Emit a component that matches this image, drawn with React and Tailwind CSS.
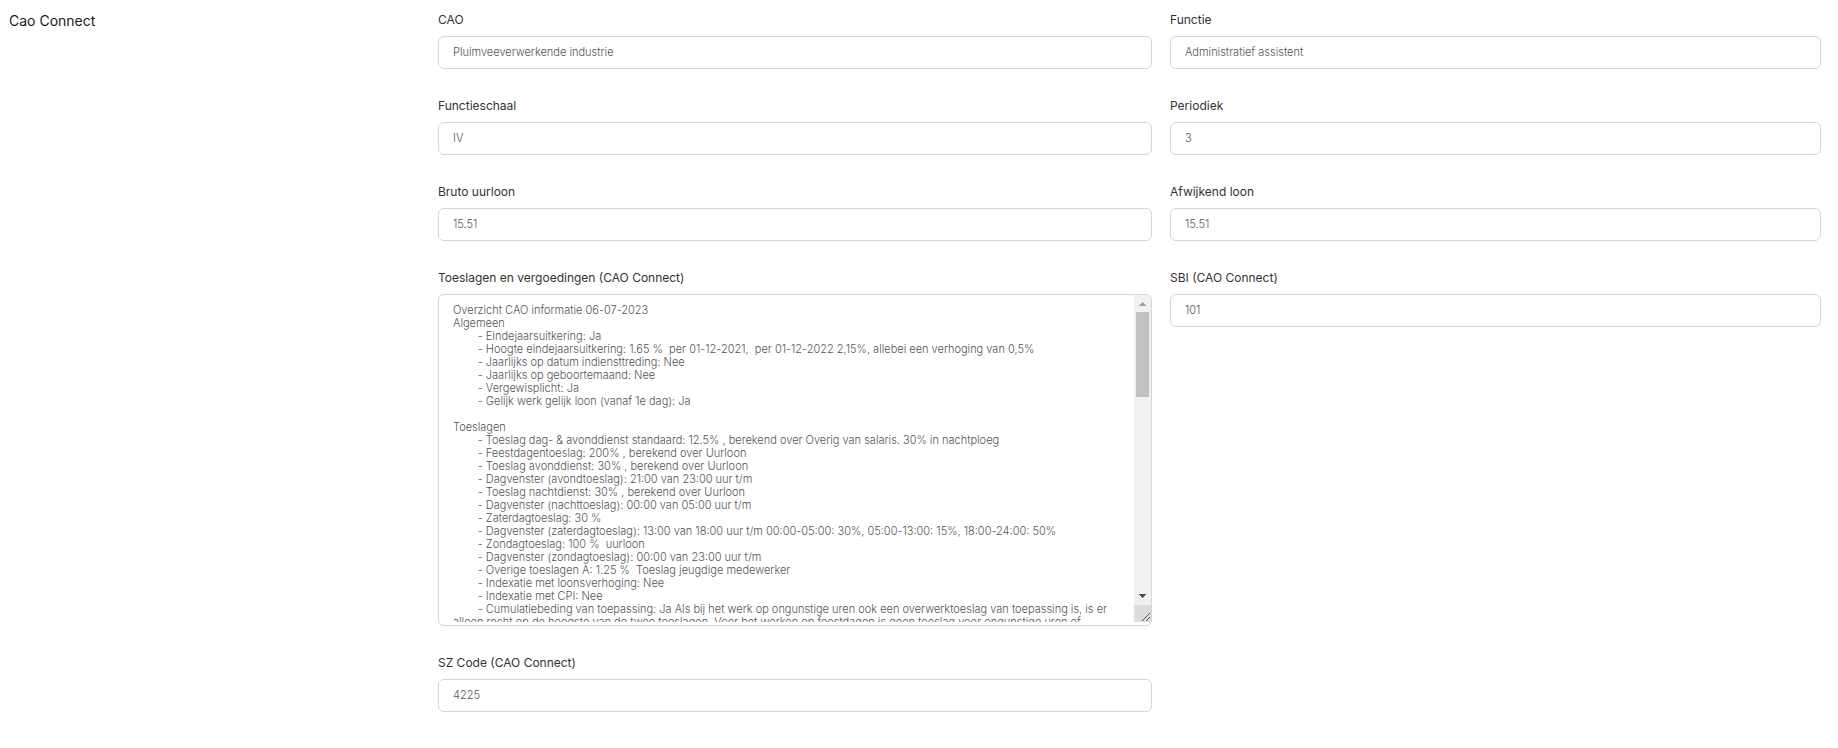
// App.jsx — Cao Connect section of the placement form
import React from 'react'

const TOESLAGEN = `Overzicht CAO informatie 06-07-2023
Algemeen
\t- Eindejaarsuitkering: Ja
\t- Hoogte eindejaarsuitkering: 1.65 %  per 01-12-2021,  per 01-12-2022 2,15%, allebei een verhoging van 0,5%
\t- Jaarlijks op datum indiensttreding: Nee
\t- Jaarlijks op geboortemaand: Nee
\t- Vergewisplicht: Ja
\t- Gelijk werk gelijk loon (vanaf 1e dag): Ja

Toeslagen
\t- Toeslag dag- & avonddienst standaard: 12.5% , berekend over Overig van salaris. 30% in nachtploeg
\t- Feestdagentoeslag: 200% , berekend over Uurloon
\t- Toeslag avonddienst: 30% , berekend over Uurloon
\t- Dagvenster (avondtoeslag): 21:00 van 23:00 uur t/m
\t- Toeslag nachtdienst: 30% , berekend over Uurloon
\t- Dagvenster (nachttoeslag): 00:00 van 05:00 uur t/m
\t- Zaterdagtoeslag: 30 %
\t- Dagvenster (zaterdagtoeslag): 13:00 van 18:00 uur t/m 00:00-05:00: 30%, 05:00-13:00: 15%, 18:00-24:00: 50%
\t- Zondagtoeslag: 100 %  uurloon
\t- Dagvenster (zondagtoeslag): 00:00 van 23:00 uur t/m
\t- Overige toeslagen A: 1.25 %  Toeslag jeugdige medewerker
\t- Indexatie met loonsverhoging: Nee
\t- Indexatie met CPI: Nee
\t- Cumulatiebeding van toepassing: Ja Als bij het werk op ongunstige uren ook een overwerktoeslag van toepassing is, is er alleen recht op de hoogste van de twee toeslagen. Voor het werken op feestdagen is geen toeslag voor ongunstige uren of`

function Label({ id, children }) {
  return (
    <label htmlFor={id} className="mb-1.5 block text-[12px] leading-5 text-[#333333]">
      {children}
    </label>
  )
}

function TextField({ id, label, value }) {
  return (
    <div>
      <Label id={id}>{label}</Label>
      <input
        id={id}
        type="text"
        defaultValue={value}
        className="block h-[33px] w-full min-w-0 rounded-md border border-[#d6d6d6] bg-white px-3.5 pb-0.5 text-[11px] font-light text-[#555555] outline-none"
      />
    </div>
  )
}

// Scrollbar track, thumb and resize grip next to the text
function ScrollRail() {
  return (
    <div aria-hidden="true" className="flex w-[17px] flex-col overflow-hidden rounded-tr-[5px] bg-[#f1f1f1]">
      <svg className="h-[17px] w-[17px]" viewBox="0 0 17 17" shapeRendering="crispEdges">
        <path d="M8 7h1v1h1v1h1v1h1v1H5v-1h1V9h1V8h1z" fill="#a3a3a3" />
      </svg>
      <div className="mx-0.5 h-[85px] bg-[#c1c1c1]" />
      <svg className="mt-auto h-[17px] w-[17px]" viewBox="0 0 17 17" shapeRendering="crispEdges">
        <path d="M5 6h7v1h-1v1h-1v1H9v1H8V9H7V8H6V7H5z" fill="#505050" />
      </svg>
      <svg className="h-[17px] w-[17px] bg-[#dcdcdc]" viewBox="0 0 17 17">
        <path d="M8 16l8-8M12 16l4-4" stroke="#555555" strokeWidth="1" fill="none" />
      </svg>
    </div>
  )
}

function TextArea({ id, label, value }) {
  return (
    <div>
      <Label id={id}>{label}</Label>
      <div className="rounded-md border border-[#d6d6d6] bg-white pb-[3px]">
        <div className="flex">
          <textarea
            id={id}
            defaultValue={value}
            className="block h-[327px] min-w-0 flex-1 resize-none overflow-y-auto px-3.5 py-[9px] text-[11px] leading-[13px] font-light text-[#555555] outline-none [scrollbar-width:none] [tab-size:8]"
          />
          <ScrollRail />
        </div>
      </div>
    </div>
  )
}

export default function App() {
  return (
    <section className="grid grid-cols-[411fr_714fr_651fr] gap-x-[18px] gap-y-[27px] bg-white pt-2.5 pr-[17px] pb-9 pl-[9px] font-['Inter',sans-serif]">
      <h2 className="row-span-5 text-[14px] leading-[22px] text-[#1a1a1a]">Cao Connect</h2>

      <TextField id="cao" label="CAO" value="Pluimveeverwerkende industrie" />
      <TextField id="functie" label="Functie" value="Administratief assistent" />
      <TextField id="functieschaal" label="Functieschaal" value="IV" />
      <TextField id="periodiek" label="Periodiek" value="3" />
      <TextField id="bruto-uurloon" label="Bruto uurloon" value="15.51" />
      <TextField id="afwijkend-loon" label="Afwijkend loon" value="15.51" />
      <TextArea id="toeslagen" label="Toeslagen en vergoedingen (CAO Connect)" value={TOESLAGEN} />
      <TextField id="sbi" label="SBI (CAO Connect)" value="101" />
      <TextField id="sz-code" label="SZ Code (CAO Connect)" value="4225" />
    </section>
  )
}
